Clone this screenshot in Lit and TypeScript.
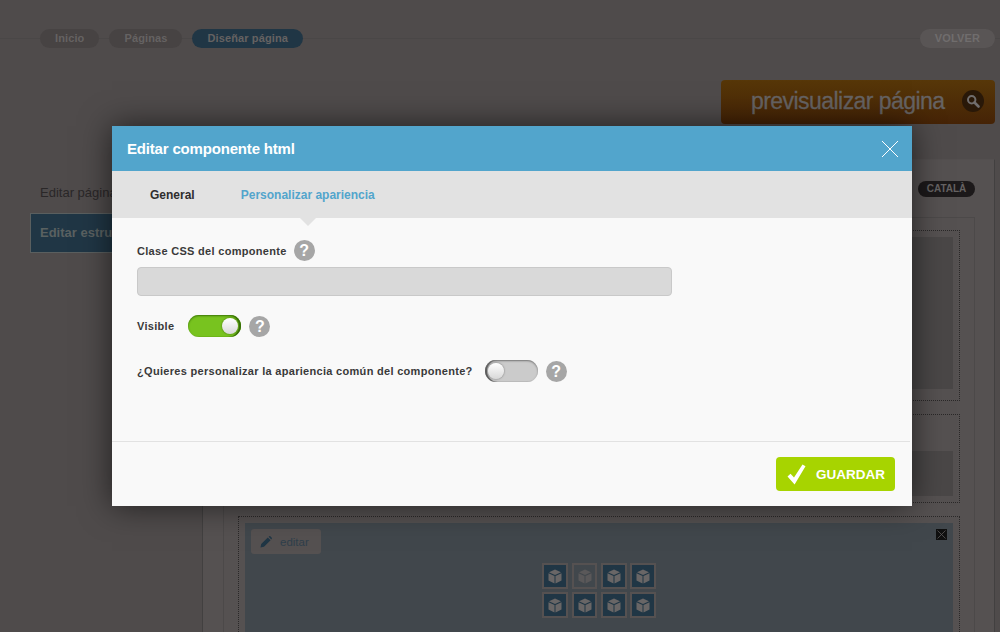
import { LitElement, html, css, svg } from "lit";
import { customElement } from "lit/decorators.js";

const cube = svg`<svg class="cube" viewBox="0 0 14 15" width="14" height="15"><path fill="currentColor" d="M7 0.500 13 3.300 7 6.100 1 3.300Z"/><path fill="currentColor" d="M0.500 4.300 6.500 7.100V14.500L0.500 11.500Z"/><path fill="currentColor" d="M13.500 4.300V11.500L7.500 14.500V7.100Z"/></svg>`;

@customElement("app-root")
export class AppRoot extends LitElement {
  static styles = css`
    :host { display: block; font-family: "Liberation Sans", Arial, sans-serif; }
    * { box-sizing: border-box; }
    .page { position: relative; width: 1000px; height: 632px; overflow: hidden; background: #4f4b4b; padding-top: 29px; }
    .crumbs {
      display: flex; align-items: center; gap: 10px; height: 19px; padding: 0 5px 0 40px;
      background: linear-gradient(#4a4747, #4a4747) center / 100% 1px no-repeat;
    }
    .pill {
      height: 19px; border-radius: 10px; background: #474343; color: #656262; font-size: 11px; font-weight: bold;
      line-height: 19px; padding: 0 15px; letter-spacing: 0.12px;
    }
    .pill.active { background: #203645; }
    .pill.back { margin-left: auto; background: #595555; color: #706d6d; }
    .preview-row { display: flex; justify-content: flex-end; padding-right: 5px; margin-top: 32px; }
    .preview {
      width: 274px; height: 44px; border-radius: 4px; background: linear-gradient(#573708, #452306);
      display: flex; align-items: center; padding: 0 0 2px 30px; color: #666363; font-size: 23px; letter-spacing: -0.55px;
      -webkit-text-stroke: 0.3px #666363;
    }
    .preview span { flex: 1; }
    .search { width: 22px; height: 22px; border-radius: 50%; background: #291808; margin-right: 11px; display: flex; align-items: center; justify-content: center; }
    .main { display: flex; margin-top: 35px; height: 473px; }
    .side { width: 202px; padding: 26px 0 0 30px; }
    .side-link { padding-left: 10px; color: #2a2728; font-size: 13px; line-height: 16px; height: 28px; }
    .side-tab {
      height: 40px; background: #203645; border: 1px solid #5a5f5f; border-right: 0; color: #5a6161; font-size: 13px; font-weight: bold;
      line-height: 38px; padding-left: 9px; white-space: nowrap;
    }
    .panel { width: 793px; border-left: 1px solid #424040; border-right: 1px solid #424040; border-top: 1px solid #534f4f; background: #555151; padding: 21px 19px 0 20px; }
    .lang-row { display: flex; justify-content: flex-end; height: 36px; }
    .lang { height: 16px; width: 57px; text-align: center; border-radius: 8px; background: #1c191a; color: #656262; font-size: 10px; font-weight: bold; line-height: 16px; }
    .frame { border: 1px solid #4c4949; border-bottom: 0; padding: 12px 14px 0; height: 500px; }
    .box { border: 1px dotted #2a2828; padding: 6px; margin-bottom: 13px; }
    .box .fill { background: #4a4747; }
    .b1 { height: 171px; }
    .b1 .fill { height: 152px; }
    .b2 { height: 89px; padding-top: 36px; }
    .b2 .fill { height: 45px; }
    .b3 { height: 200px; }
    .b3 .fill { position: relative; height: 190px; background: #41474c; padding: 6px; }
    .edit {
      width: 70px; height: 25px; border-radius: 3px; background: #555151; color: #2f3f4b; font-size: 11.500px;
      display: flex; align-items: center; gap: 8px; padding-left: 9px;
    }
    .x-box { position: absolute; top: 6px; right: 6px; width: 11px; height: 11px; background: #0f0f0f; display: block; }
    .tiles { display: grid; grid-template-columns: 27px 26px 26px 26px; gap: 3px; margin: 9px 0 0 291px; }
    .tile { width: 26px; height: 26px; border: 2px solid #555151; background: #203645; color: #696666; display: flex; align-items: center; justify-content: center; }
    .tile.dim { background: #41474c; color: #5a5859; }
    .tile:nth-child(4n+2) { width: 25px; }

    .modal {
      position: absolute; left: 112px; top: 126px; width: 800px; height: 380px; background: #f9f9f9;
      box-shadow: 0 0 30px rgba(0,0,0,0.6); display: flex; flex-direction: column; color: #2f2d2e;
    }
    .head { height: 45px; background: #52a5cc; color: #fff; font-size: 15px; font-weight: bold; letter-spacing: -0.18px; display: flex; align-items: center; justify-content: space-between; padding: 0 13px 0 15px; flex: none; }
    .tabs { position: relative; height: 47px; background: #e2e2e2; display: flex; align-items: center; font-size: 12px; font-weight: bold; padding-left: 38px; flex: none; }
    .tabs .on { color: #52a5cc; margin-left: 46px; }
    .tabs::after {
      content: ""; position: absolute; left: 188px; top: 47px; width: 0; height: 0;
      border-left: 8px solid transparent; border-right: 8px solid transparent; border-top: 8px solid #e2e2e2;
    }
    .body { flex: 1; padding: 22px 25px 0; }
    label { font-size: 11px; font-weight: bold; letter-spacing: 0.3px; color: #3a3a3a; white-space: nowrap; }
    .line { display: flex; align-items: center; height: 21px; }
    .help { width: 21px; height: 21px; border-radius: 50%; background: #a6a6a6; color: #fff; font-size: 16px; font-weight: bold; text-align: center; line-height: 21px; flex: none; }
    .input { width: 535px; height: 29px; margin: 6px 0 19px; background: #d9d9d9; border: 1px solid #c9c9c9; border-radius: 4px; }
    .l1 label { margin-right: 7px; }
    .l2 { height: 22px; margin-bottom: 23px; }
    .l2 label { margin-right: 14px; }
    .l2 .help { margin-left: 8px; }
    .l3 { height: 22px; }
    .l3 label { margin-right: 12px; }
    .l3 .help { margin-left: 8px; }
    .toggle { position: relative; width: 53px; height: 22px; border-radius: 11px; flex: none; }
    .toggle.on { background: #78c31f; box-shadow: inset 0 1px 2px #3d7808, inset -2px 0 1px #356a08; }
    .toggle.off { background: #cbcbcb; box-shadow: inset 0 1px 2px #777, inset 2px 0 1px #555; }
    .toggle i {
      position: absolute; top: 3px; width: 16px; height: 16px; border-radius: 50%;
      background: linear-gradient(#fff, #d8d8d8); box-shadow: 0 0 2px rgba(0,0,0,.5); display: block;
    }
    .toggle.on i { right: 3px; }
    .toggle.off i { left: 3px; }
    .foot { flex: none; height: 65px; border-top: 1px solid #e2e2e2; margin-right: 2px; display: flex; justify-content: flex-end; padding: 15px 15px 0 0; }
    .save {
      width: 119px; height: 34px; border-radius: 4px; background: #a7d400; color: #fff; font-size: 13.500px; font-weight: bold;
      display: flex; align-items: center; gap: 9px; padding-left: 10px;
    }
  `;

  render() {
    return html`
      <div class="page">
        <div class="crumbs">
          <div class="pill">Inicio</div>
          <div class="pill">Páginas</div>
          <div class="pill active">Diseñar página</div>
          <div class="pill back">VOLVER</div>
        </div>
        <div class="preview-row">
          <div class="preview">
            <span>previsualizar página</span>
            <div class="search">
              <svg width="14" height="14" viewBox="0 0 14 14"><circle cx="5.700" cy="5.700" r="3.700" fill="none" stroke="#706d6d" stroke-width="2"/><path d="M8.500 8.500 12.500 12.500" stroke="#706d6d" stroke-width="2.600" stroke-linecap="round"/></svg>
            </div>
          </div>
        </div>
        <div class="main">
          <div class="side">
            <div class="side-link">Editar página</div>
            <div class="side-tab">Editar estructura</div>
          </div>
          <div class="panel">
            <div class="lang-row"><div class="lang">CATALÀ</div></div>
            <div class="frame">
              <div class="box b1"><div class="fill"></div></div>
              <div class="box b2"><div class="fill"></div></div>
              <div class="box b3">
                <div class="fill">
                  <div class="edit">
                    <svg width="12" height="12" viewBox="0 0 12 12"><path fill="#203645" d="M0.500 11.500 1.200 8 7.800 1.400 10.600 4.200 4 10.800ZM8.600 0.700 9.300 0.200C9.700 0 10 0 10.300 0.200L11.800 1.700C12 2 12 2.300 11.800 2.700L11.300 3.400Z"/></svg>
                    <span>editar</span>
                  </div>
                  <svg class="x-box" viewBox="0 0 11 11"><path d="M1.500 1.500 9.500 9.500M9.500 1.500 1.500 9.500" stroke="#5a5858" stroke-width="0.800"/></svg>
                  <div class="tiles">
                    <div class="tile">${cube}</div>
                    <div class="tile dim">${cube}</div>
                    <div class="tile">${cube}</div>
                    <div class="tile">${cube}</div>
                    <div class="tile">${cube}</div>
                    <div class="tile">${cube}</div>
                    <div class="tile">${cube}</div>
                    <div class="tile">${cube}</div>
                  </div>
                </div>
              </div>
            </div>
          </div>
        </div>

        <div class="modal">
          <div class="head">
            <span>Editar componente html</span>
            <svg width="18" height="18" viewBox="0 0 18 18"><path d="M1 1 17 17M17 1 1 17" stroke="#fff" stroke-width="1"/></svg>
          </div>
          <div class="tabs"><span>General</span><span class="on">Personalizar apariencia</span></div>
          <div class="body">
            <div class="line l1"><label>Clase CSS del componente</label><div class="help">?</div></div>
            <div class="input"></div>
            <div class="line l2">
              <label>Visible</label>
              <div class="toggle on"><i></i></div>
              <div class="help">?</div>
            </div>
            <div class="line l3">
              <label>¿Quieres personalizar la apariencia común del componente?</label>
              <div class="toggle off"><i></i></div>
              <div class="help">?</div>
            </div>
          </div>
          <div class="foot">
            <div class="save">
              <svg width="21" height="21" viewBox="0 0 21 21"><path d="M1.500 12.500 4.500 9.700 8 13.500 16.500 0.500 19.500 2.200 8.600 20.500Z" fill="#fff"/></svg>
              <span>GUARDAR</span>
            </div>
          </div>
        </div>
      </div>
    `;
  }
}
